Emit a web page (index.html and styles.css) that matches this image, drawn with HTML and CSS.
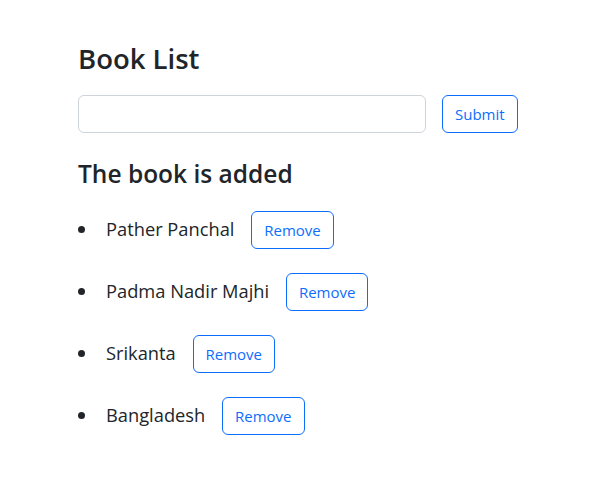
FILE: index.html
```html
<!DOCTYPE html>
<html lang="en">
<head>
<meta charset="utf-8">
<title>Book List</title>
<link rel="stylesheet" href="styles.css">
</head>
<body>
<div class="page">
  <h1 class="title">Book List</h1>
  <form class="add-form">
    <input class="book-input" type="text">
    <button class="btn" type="button">Submit</button>
  </form>
  <h2 class="subtitle">The book is added</h2>
  <ul class="books">
    <li class="book">Pather Panchal <button class="btn btn-remove" type="button">Remove</button></li>
    <li class="book">Padma Nadir Majhi <button class="btn btn-remove" type="button">Remove</button></li>
    <li class="book">Srikanta <button class="btn btn-remove" type="button">Remove</button></li>
    <li class="book">Bangladesh <button class="btn btn-remove" type="button">Remove</button></li>
  </ul>
</div>
</body>
</html>
```

FILE: styles.css
```css
* { box-sizing: border-box; }
html, body { margin: 0; padding: 0; background: #fff; }
body {
  font-family: "Open Sans", "Noto Sans", sans-serif;
  color: #212529;
  font-size: 16px;
  line-height: 1.5;
}
.page {
  padding: 42px 0 0 78px;
}
.title {
  margin: 0;
  font-size: 27.5px;
  font-weight: 600;
  line-height: 1.2;
}
.add-form {
  display: flex;
  gap: 16px;
  margin-top: 20px;
}
.book-input {
  width: 348px;
  height: 38px;
  border: 1px solid #ced4da;
  border-radius: 6px;
  padding: 6px 12px;
  font: inherit;
}
.btn {
  display: inline-block;
  height: 38px;
  padding: 6px 12px;
  font-family: inherit;
  font-size: 15px;
  line-height: 24px;
  color: #0d6efd;
  background: #fff;
  border: 1px solid #0d6efd;
  border-radius: 6px;
}
.subtitle {
  margin: 26px 0 0;
  font-size: 24.5px;
  font-weight: 600;
  line-height: 1.2;
}
.books {
  margin: 23px 0 0;
  padding-left: 20px;
  list-style: disc;
}
.book {
  padding-left: 8px;
  font-size: 18.3px;
  margin-bottom: 24px;
}
.btn-remove {
  margin-left: 12px;
}
```
